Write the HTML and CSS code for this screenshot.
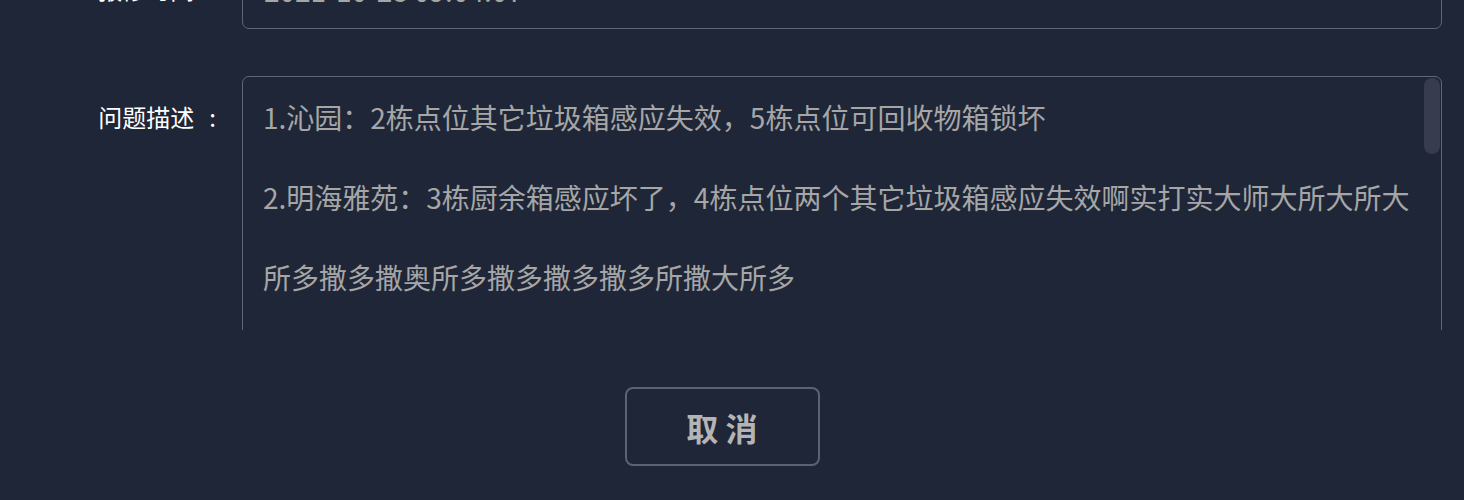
FILE: index.html
```html
<!DOCTYPE html>
<html lang="zh-CN">
<head>
    <meta charset="UTF-8">
    <meta name="viewport" content="width=device-width, initial-scale=1.0">
    <title>报修详情</title>
    <link rel="stylesheet" href="styles.css">
</head>
<body>
    <div class="dialog-body">
        <div class="form">
            <div class="form-item">
                <label class="form-label label-input">报修时间<span class="colon">:</span></label>
                <div class="form-input">2021-10-28 09:04:07</div>
            </div>
            <div class="form-item">
                <label class="form-label label-top">问题描述<span class="colon">:</span></label>
                <div class="form-textarea">
                    <div class="textarea-text">1.沁园：2栋点位其它垃圾箱感应失效，5栋点位可回收物箱锁坏

2.明海雅苑：3栋厨余箱感应坏了，4栋点位两个其它垃圾箱感应失效啊实打实大师大所大所大

所多撒多撒奥所多撒多撒多撒多所撒大所多</div>
                    <span class="scroll-thumb"></span>
                </div>
            </div>
        </div>
    </div>
    <div class="dialog-footer">
        <button class="btn">取 消</button>
    </div>
</body>
</html>
```

FILE: styles.css
```css
html, body {
    margin: 0;
    height: 500px;
    overflow: hidden;
    background-color: #1f2638;
    font-family: "Noto Sans CJK SC", "Noto Sans", sans-serif;
}
.dialog-body {
    height: 330px;
    overflow: hidden;
}
.form {
    margin-top: -41px;
    padding-right: 22px;
}
.form-item {
    display: flex;
    align-items: flex-start;
    margin-bottom: 47px;
}
.form-label {
    flex: 0 0 242px;
    box-sizing: border-box;
    padding-right: 26px;
    text-align: right;
    font-size: 24px;
    line-height: 40px;
    color: #ffffff;
}
.label-input {
    line-height: 60px;
}
.label-top {
    padding-top: 21px;
}
.colon {
    margin-left: 15px;
}
.form-input {
    flex: 1;
    height: 70px;
    box-sizing: border-box;
    border: 1px solid #5f6679;
    border-radius: 7px;
    padding: 0 21px;
    font-size: 28px;
    line-height: 60px;
    color: #a6a6a6;
}
.form-textarea {
    flex: 1;
    position: relative;
    height: 420px;
    box-sizing: border-box;
    border: 1px solid #5f6679;
    border-radius: 7px;
    padding: 20px 21px 20px 20px;
}
.textarea-text {
    white-space: pre-wrap;
    font-size: 28px;
    line-height: 40px;
    color: #a6a6a6;
}
.scroll-thumb {
    position: absolute;
    top: 1px;
    right: 1px;
    width: 16px;
    height: 76px;
    border-radius: 8px;
    background-color: #373d4f;
}
.dialog-footer {
    padding: 57px 20px 0 0;
    text-align: center;
}
.btn {
    width: 195px;
    height: 79px;
    border: 2px solid #5b6276;
    border-radius: 8px;
    background-color: transparent;
    color: #b4b4b4;
    font-family: "Noto Sans CJK SC", sans-serif;
    font-size: 32px;
    font-weight: bold;
    cursor: pointer;
}
```
